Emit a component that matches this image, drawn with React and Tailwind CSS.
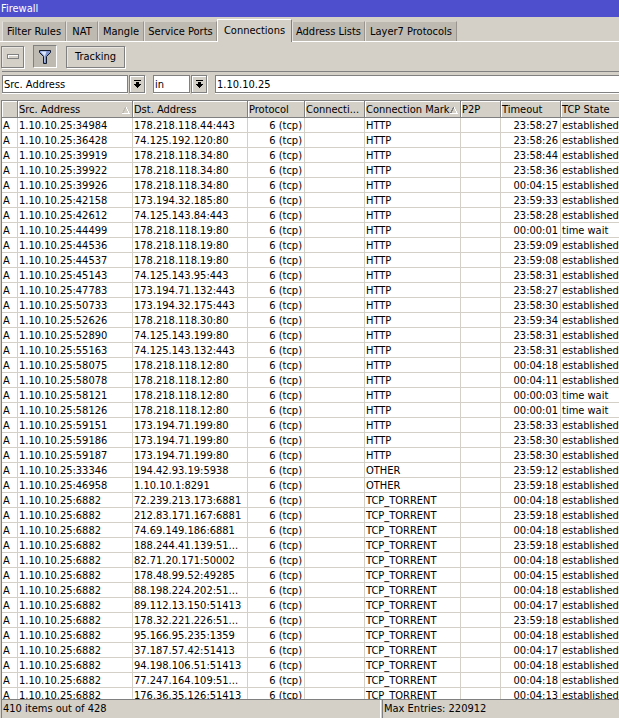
import { useState } from 'react'

// src port, dst, mark, timeout, state
const H = 'HTTP', T = 'TCP_TORRENT', E = 'established'
const ROWS = [
  ['34984', '178.218.118.44:443', H, '23:58:27', E],
  ['36428', '74.125.192.120:80', H, '23:58:26', E],
  ['39919', '178.218.118.34:80', H, '23:58:44', E],
  ['39922', '178.218.118.34:80', H, '23:58:36', E],
  ['39926', '178.218.118.34:80', H, '00:04:15', E],
  ['42158', '173.194.32.185:80', H, '23:59:33', E],
  ['42612', '74.125.143.84:443', H, '23:58:28', E],
  ['44499', '178.218.118.19:80', H, '00:00:01', 'time wait'],
  ['44536', '178.218.118.19:80', H, '23:59:09', E],
  ['44537', '178.218.118.19:80', H, '23:59:08', E],
  ['45143', '74.125.143.95:443', H, '23:58:31', E],
  ['47783', '173.194.71.132:443', H, '23:58:27', E],
  ['50733', '173.194.32.175:443', H, '23:58:30', E],
  ['52626', '178.218.118.30:80', H, '23:59:34', E],
  ['52890', '74.125.143.199:80', H, '23:58:31', E],
  ['55163', '74.125.143.132:443', H, '23:58:31', E],
  ['58075', '178.218.118.12:80', H, '00:04:18', E],
  ['58078', '178.218.118.12:80', H, '00:04:11', E],
  ['58121', '178.218.118.12:80', H, '00:00:03', 'time wait'],
  ['58126', '178.218.118.12:80', H, '00:00:01', 'time wait'],
  ['59151', '173.194.71.199:80', H, '23:58:33', E],
  ['59186', '173.194.71.199:80', H, '23:58:30', E],
  ['59187', '173.194.71.199:80', H, '23:58:30', E],
  ['33346', '194.42.93.19:5938', 'OTHER', '23:59:12', E],
  ['46958', '1.10.10.1:8291', 'OTHER', '23:59:18', E],
  ['6882', '72.239.213.173:6881', T, '00:04:18', E],
  ['6882', '212.83.171.167:6881', T, '23:59:18', E],
  ['6882', '74.69.149.186:6881', T, '00:04:18', E],
  ['6882', '188.244.41.139:51...', T, '23:59:18', E],
  ['6882', '82.71.20.171:50002', T, '00:04:18', E],
  ['6882', '178.48.99.52:49285', T, '00:04:15', E],
  ['6882', '88.198.224.202:51...', T, '00:04:18', E],
  ['6882', '89.112.13.150:51413', T, '00:04:17', E],
  ['6882', '178.32.221.226:51...', T, '23:59:18', E],
  ['6882', '95.166.95.235:1359', T, '00:04:18', E],
  ['6882', '37.187.57.42:51413', T, '00:04:17', E],
  ['6882', '94.198.106.51:51413', T, '00:04:18', E],
  ['6882', '77.247.164.109:51...', T, '00:04:18', E],
  ['6882', '176.36.35.126:51413', T, '00:04:13', E],
]

const TABS = [
  { label: 'Filter Rules', w: 'w-16' },
  { label: 'NAT', w: 'w-8' },
  { label: 'Mangle', w: 'w-[46px]' },
  { label: 'Service Ports', w: 'w-[73px]' },
  { label: 'Connections', w: 'w-[75px]' },
  { label: 'Address Lists', w: 'w-[73px]' },
  { label: 'Layer7 Protocols', w: 'w-[92px]' },
]

const COLS = [
  { label: '', w: 'w-[16px]' },
  { label: 'Src. Address', w: 'w-[115px]', sort: '#bdb9b1' },
  { label: 'Dst. Address', w: 'w-[115px]' },
  { label: 'Protocol', w: 'w-[57px]' },
  { label: 'Connecti...', w: 'w-[60px]' },
  { label: 'Connection Mark', w: 'w-[96px]', sort: '#808080' },
  { label: 'P2P', w: 'w-[40px]' },
  { label: 'Timeout', w: 'w-[60px]' },
  { label: 'TCP State', w: 'w-auto' },
]

const TD = 'h-[15px] p-0 pt-px pl-px border-r border-b border-[#d4d0c8] overflow-hidden whitespace-nowrap leading-[13px]'
const TD_R = 'h-[15px] p-0 pt-px pr-[2px] border-r border-b border-[#d4d0c8] overflow-hidden whitespace-nowrap leading-[13px] text-right'
const RAISED = 'h-[22px] border border-[#808080] bg-[#d4d0c8] shadow-[inset_1px_1px_0_#e9e6e1,1px_1px_0_#fff] flex items-center justify-center'
const FIELD = 'h-[18px] border border-[#808080] bg-white pt-px pl-px leading-[15px] rounded-none appearance-none outline-none shadow-[0_1px_0_#fff]'

function SortMark({ color }) {
  return (
    <svg width="8" height="7" viewBox="0 0 8 7" className="shrink-0" shapeRendering="crispEdges">
      <path d="M4 0h1v2h1v2h1v2h1v1H0V6h6V4H5V2H4z" fill="#fff" />
      <path d="M3 0h1v2H3v2H2v2H0V5h1V3h1V1h1z" fill={color} />
    </svg>
  )
}

function DropButton({ label }) {
  return (
    <button aria-label={label} className="ml-px w-4 h-[18px] border border-[#808080] bg-[#d4d0c8] shadow-[inset_1px_1px_0_#fff,1px_1px_0_#fff] flex items-center justify-center shrink-0">
      <svg width="7" height="8" viewBox="0 0 7 8" shapeRendering="crispEdges">
        <path d="M0 0h7v1H0zM2 2h3v2h2v1H6v1H5v1H4v1H3V7H2V6H1V5H0V4h2z" />
      </svg>
    </button>
  )
}

export default function App() {
  const [tab, setTab] = useState('Connections')
  const [query, setQuery] = useState('1.10.10.25')

  return (
    <div className="h-screen flex flex-col overflow-hidden bg-[#d4d0c8] text-black text-[11px] leading-[14px] font-['DejaVu_Sans_Condensed','DejaVu_Sans',sans-serif]">
      <h1 className="h-[17px] shrink-0 bg-[#4e4fcd] text-white pt-px pl-px leading-4">Firewall</h1>

      {/* Tabs */}
      <div role="tablist" className="h-[25px] shrink-0 flex items-end pl-[2px] border-b border-white">
        {TABS.map(t => (
          <button key={t.label} role="tab" aria-selected={tab === t.label} onClick={() => setTab(t.label)}
            className={`${t.w} shrink-0 border-l border-t border-r whitespace-nowrap ${tab === t.label
              ? 'h-[23px] -mb-px pb-px bg-[#d4d0c8] border-l-white border-t-white border-r-[#808080]'
              : 'h-5 pt-px bg-[#beb9b1] border-l-[#e4e1dc] border-t-[#d4d0c8] border-r-[#9a968f]'}`}>
            {t.label}
          </button>
        ))}
      </div>

      {/* Toolbar */}
      <div className="h-[29px] shrink-0 flex items-center pl-px gap-[9px]">
        <button aria-label="Remove" className={`${RAISED} w-[23px]`}>
          <svg width="12" height="5" viewBox="0 0 12 5" shapeRendering="crispEdges">
            <path d="M0 0h12v5H0z" fill="#808080" />
            <path d="M1 1h10v3H1z" fill="#fff" />
            <path d="M2 2h9v2H2z" fill="#d4d0c8" />
          </svg>
        </button>
        <button aria-label="Filter" aria-pressed="true" className="w-6 h-[23px] bg-[#beb9b1] border border-l-[#808080] border-t-[#808080] border-r-white border-b-white flex items-center justify-center">
          <svg width="12" height="14" viewBox="0 0 12 14">
            <path d="M.5.5h11v2L7.500 6.500v7h-3v-7L.5 2.500z" fill="#7d93cf" stroke="#10182c" />
            <path d="M1.500 1.500h6L6 6v6H5.500V6z" fill="#dbe5fb" />
          </svg>
        </button>
        <button className={`${RAISED} w-[59px] pt-px`}>Tracking</button>
      </div>

      {/* Filter bar */}
      <div className="shrink-0 ml-[2px] pt-[3px] h-[29px] border-t border-[#808080] flex">
        <select aria-label="Field" className={`${FIELD} w-[126px]`}>
          <option>Src. Address</option>
        </select>
        <DropButton label="Choose field" />
        <select aria-label="Operator" className={`${FIELD} w-[37px] ml-2`}>
          <option>in</option>
        </select>
        <DropButton label="Choose operator" />
        <input aria-label="Value" value={query} onChange={e => setQuery(e.target.value)}
          className={`${FIELD} flex-1 min-w-0 ml-2 border-r-0`} />
      </div>

      {/* Connection list */}
      <div className="flex-1 min-h-0 overflow-hidden ml-px border-l border-t border-[#808080] bg-white">
        <table className="w-full table-fixed border-separate border-spacing-0">
          <thead>
            <tr>
              {COLS.map((c, i) => (
                <th key={i} className={`${c.w} h-[17px] p-0 border-r border-b border-[#808080] bg-[#d4d0c8] shadow-[inset_1px_1px_0_#fff] font-normal text-left overflow-hidden whitespace-nowrap last:border-r-0`}>
                  <div className="flex items-center justify-between pt-[2px] pl-px pr-[2px]">
                    <span>{c.label}</span>
                    {c.sort && <SortMark color={c.sort} />}
                  </div>
                </th>
              ))}
            </tr>
          </thead>
          <tbody>
            {ROWS.map(([port, dst, mark, timeout, state], i) => (
              <tr key={i}>
                <td className={TD}>A</td>
                <td className={TD}>1.10.10.25:{port}</td>
                <td className={TD}>{dst}</td>
                <td className={TD_R}>6 (tcp)</td>
                <td className={TD}></td>
                <td className={TD}>{mark}</td>
                <td className={TD}></td>
                <td className={TD_R}>{timeout}</td>
                <td className={`${TD} last:border-r-0`}>{state}</td>
              </tr>
            ))}
          </tbody>
        </table>
      </div>

      {/* Status bar */}
      <div className="h-[19px] shrink-0 ml-px border-l border-t border-[#808080] flex leading-[18px]">
        <div className="w-[379px] pl-px border-r border-white">410 items out of 428</div>
        <div className="flex-1 ml-px pl-px border-l border-[#808080]">Max Entries: 220912</div>
      </div>
    </div>
  )
}
